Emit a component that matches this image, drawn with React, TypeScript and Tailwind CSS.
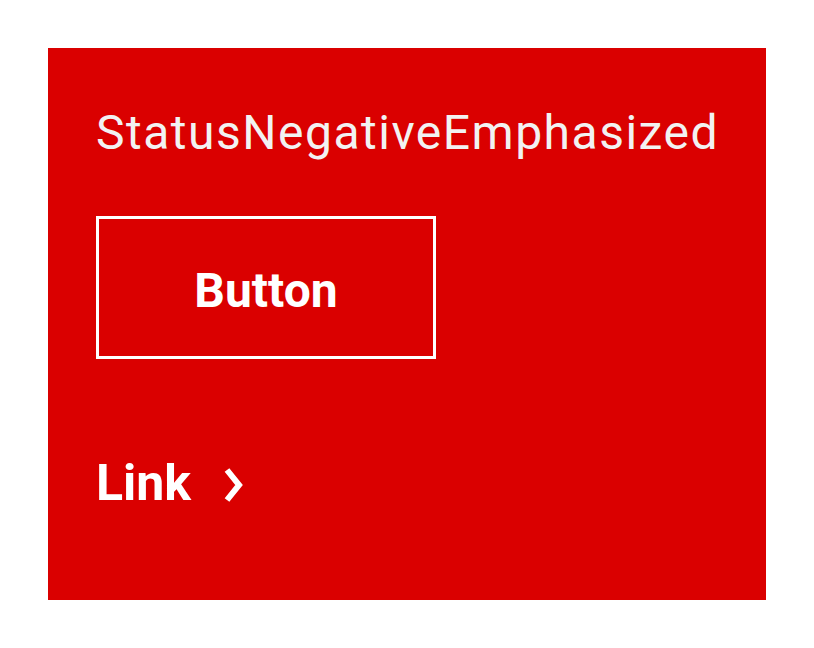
export default function App() {
  return (
    <div className="min-h-screen bg-white p-12 font-['Roboto',sans-serif]">
      <div className="flex h-[552px] w-[718px] flex-col items-start bg-[#da0000] px-12 pt-[61px]">
        <h1 className="text-[48px] font-normal leading-[48px] tracking-[1.5px] text-[#f2f2f2]">StatusNegativeEmphasized</h1>

        <button className="mt-[59px] flex h-[143px] w-[340px] items-center justify-center border-[3px] border-white pt-[7px] text-[48px] font-bold leading-[48px] text-white">
          Button
        </button>

        <a href="#" className="mt-[99px] flex items-center text-[50px] font-bold leading-[50px] text-white">
          Link
          <svg width="24" height="40" viewBox="0 0 24 40" className="ml-[31px] mt-[3px]" fill="none">
            <polyline points="5,5 17,20 5,35" stroke="white" strokeWidth="6" strokeLinejoin="miter" />
          </svg>
        </a>
      </div>
    </div>
  );
}
